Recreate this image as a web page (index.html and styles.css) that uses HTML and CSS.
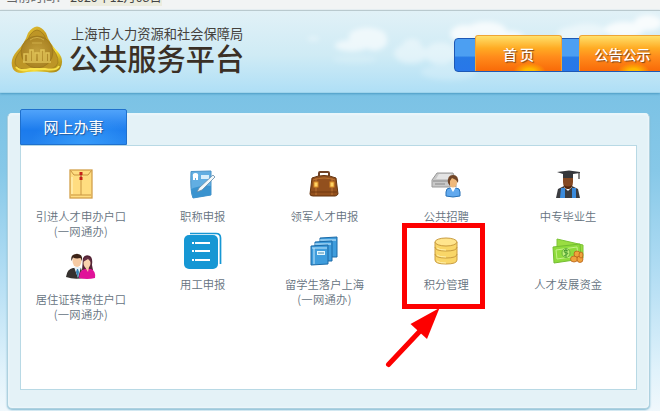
FILE: index.html
```html
<!DOCTYPE html>
<html lang="zh-CN">
<head>
<meta charset="utf-8">
<title>公共服务平台</title>
<link rel="stylesheet" href="styles.css">
</head>
<body>
<div class="topbar"><span>当前时间： <b>2020年12月08日</b></span></div>
<header class="header">
  <svg class="clouds" viewBox="0 0 660 82" aria-hidden="true">
    <defs><filter id="soft" x="-20%" y="-30%" width="140%" height="160%"><feGaussianBlur stdDeviation="2.5"/></filter></defs>
    <g fill="#fff" filter="url(#soft)">
      <g opacity=".6"><ellipse cx="368" cy="26" rx="19" ry="9"/><ellipse cx="352" cy="35" rx="17" ry="6"/><ellipse cx="375" cy="30" rx="13" ry="10"/></g>
      <g opacity=".4"><ellipse cx="412" cy="43" rx="17" ry="10"/><ellipse cx="413" cy="34" rx="9" ry="6"/><ellipse cx="442" cy="43" rx="16" ry="11"/><ellipse cx="313" cy="28" rx="6" ry="2"/><ellipse cx="355" cy="49" rx="22" ry="4" opacity=".4"/></g>
      <g opacity=".75"><ellipse cx="488" cy="19" rx="20" ry="8"/><ellipse cx="466" cy="23" rx="14" ry="9"/><ellipse cx="510" cy="26" rx="16" ry="6"/></g>
      <g opacity=".45"><ellipse cx="590" cy="20" rx="20" ry="7"/><ellipse cx="575" cy="24" rx="15" ry="8"/></g>
      <g opacity=".8"><ellipse cx="652" cy="12" rx="14" ry="8"/><ellipse cx="628" cy="19" rx="20" ry="8"/></g>
      <ellipse cx="450" cy="62" rx="28" ry="8" opacity=".2"/>
    </g>
  </svg>
  <svg class="emblem" viewBox="0 0 52 48" aria-hidden="true">
    <defs>
      <linearGradient id="gold" x2="1" y2="1"><stop offset="0" stop-color="#f4d73d"/><stop offset=".45" stop-color="#c2971e"/><stop offset=".7" stop-color="#f7dc34"/><stop offset="1" stop-color="#94700e"/></linearGradient>
      <radialGradient id="coin"><stop offset="0" stop-color="#c3a03c"/><stop offset="1" stop-color="#a98222"/></radialGradient>
    </defs>
    <path d="M17 7Q26-6 35 7Q38 17 47 26Q54 34 49 43Q45 48 36 46Q26 45 16 46Q6 49 2 43Q-2 34 6 25Q14 17 17 7Z" fill="url(#gold)"/>
    <path d="M19 9Q26-1 33 9L37 18Q48 28 47 37Q44 44 34 43L18 43Q6 45 4 37Q4 29 14 20Z" fill="#bd9526" stroke="#94701a" stroke-width=".6"/>
    <circle cx="26" cy="26" r="16" fill="url(#coin)" stroke="#94701a" stroke-width=".6"/>
    <path d="M13 36V28h4v7m2 0V24h3v11m2 0V27h4v8m2 0V24h3v11m2 0v-8h3v8M12 36h28" fill="none" stroke="#e0c257" stroke-width="1.500"/>
    <path d="M19 14q7-5 14 0M21 17h10" fill="none" stroke="#cfae48"/>
    <path d="M5 41q4 5 14 2h15q12 2 14-3" fill="none" stroke="#f9e24a" stroke-width="2"/>
  </svg>
  <div class="brand">
    <div class="org">上海市人力资源和社会保障局</div>
    <div class="name">公共服务平台</div>
  </div>
  <nav class="nav">
    <a class="nav-item">首 页</a>
    <a class="nav-item">公告公示</a>
  </nav>
</header>
<main class="panel">
  <h2 class="tab">网上办事</h2>
  <section class="services">
    <div class="col">
      <a class="item">
        <span class="icon"><svg width="24" height="30" viewBox="0 0 24 30"><rect x="1" y="1" width="22" height="28" fill="#ffdd80" stroke="#d3a04a" stroke-width="1.3"/><path d="M1.500 1.500L5 6h14l3.500-4.500M12 7v19M2 26h20" fill="none" stroke="#c99541"/><path d="M3 8v17" stroke="#ffeeb0" stroke-width="1.500"/><rect x="10.500" y="3" width="3" height="3" fill="#c5221a"/><rect x="10.500" y="8" width="3" height="3" fill="#c5221a"/><path d="M12 6v2" stroke="#a33"/></svg></span>
        <span class="label">引进人才申办户口<br><span class="sub">(一网通办)</span></span>
      </a>
      <a class="item">
        <span class="icon"><svg width="31" height="27" viewBox="0 0 31 27"><path d="M1 24Q2 16 8 15L16 15L19 25Q9 27 1 24" fill="#35312e"/><path d="M9 14l4 11 3-11" fill="#e6f1f8"/><path d="M12 16l-1 3 2 6 1-6-1-3" fill="#3382b5"/><ellipse cx="12" cy="8" rx="4.500" ry="6" fill="#f6cba4"/><path d="M6.500 8Q5 1 12 .7Q18 1 17 8L15.500 5Q11 6 8 4.500Z" fill="#3c2317"/><path d="M18 5Q20 1 25 3Q28 5 27 12L28 17H17Z" fill="#542435"/><path d="M14 25Q14 17 20 16L26 16Q31 18 30 25Q22 27 14 25" fill="#e01299"/><ellipse cx="22" cy="10" rx="3.500" ry="5" fill="#f9d2ae"/><path d="M20 14h4l-1 5z" fill="#f6cba4"/><path d="M18 9Q18 4 23 4Q26 5 26 9L23 6Z" fill="#653044"/></svg></span>
        <span class="label">居住证转常住户口<br><span class="sub">(一网通办)</span></span>
      </a>
    </div>
    <div class="col">
      <a class="item">
        <span class="icon"><svg width="28" height="29" viewBox="0 0 28 29"><path d="M2 1.500L22 1v24L4 28Q1 22 2 1.500" fill="#62aee2" stroke="#4b94c8"/><path d="M2 19Q14 14 22 16v9L4 28Z" fill="#3a93cf"/><path d="M4 10V7q-1-4 2.500-4T9 7v3H7V8H6v2z" fill="#fff"/><path d="M12 5h8v4h-8z" fill="#d8effc"/><path d="M8 22l2-4L24 5l2 2-13 13z" fill="#f3f8fa" stroke="#638ba8" stroke-width=".8"/></svg></span>
        <span class="label">职称申报</span>
      </a>
      <a class="item">
        <span class="icon"><svg width="38" height="38" viewBox="0 0 38 38"><path d="M6 1.500H32Q36.500 1.500 36.500 6V32" fill="none" stroke="#1697d4" stroke-width="1.700"/><rect x="0" y="3" width="34" height="34" rx="5" fill="#1697d4"/><path d="M8 11h2m1 0h15M8 19h2m1 0h15M8 28h2m1 0h15" stroke="#fff" stroke-width="2"/></svg></span>
        <span class="label">用工申报</span>
      </a>
    </div>
    <div class="col">
      <a class="item">
        <span class="icon"><svg width="30" height="26" viewBox="0 0 30 26"><path d="M10 5V2q0-1 1-1h8q1 0 1 1v3" fill="none" stroke="#704226" stroke-width="2"/><path d="M3 7Q15 2 27 7L29 23Q28 25 26 25H4Q1 25 1 23Z" fill="#92501e" stroke="#65330d"/><path d="M4 9Q15 5 26 9M7 7v17M23 7v17" fill="none" stroke="#bd7432"/><path d="M2 21h26" stroke="#713810"/><rect x="5" y="11" width="4" height="5" fill="#ffd365" stroke="#d88924"/><rect x="21" y="11" width="4" height="5" fill="#ffd365" stroke="#d88924"/></svg></span>
        <span class="label">领军人才申报</span>
      </a>
      <a class="item">
        <span class="icon"><svg width="28" height="30" viewBox="0 0 28 30"><g fill="#3f9ddd" stroke="#1c6ba8"><path d="M10 2L27 1v20H10z"/><path d="M10 4h16" stroke="#d7f1ff"/><path d="M5 6L22 5v20H5z"/><path d="M5 8h16" stroke="#d7f1ff"/><path d="M1 10l17-1v19l-17 1z"/></g><path d="M2 12h15M4 12v16" stroke="#c5e7fa"/><path d="M7 15h8v4H7z" fill="#e5f7ff"/><path d="M8 17h6" stroke="#48a"/></svg></span>
        <span class="label">留学生落户上海<br><span class="sub">(一网通办)</span></span>
      </a>
    </div>
    <div class="col">
      <a class="item">
        <span class="icon"><svg width="30" height="27" viewBox="0 0 30 27"><path d="M1 9L6 2h16l3 7v7H1z" fill="#c8c8c8" stroke="#999"/><path d="M5 8l3-5h12l2 5z" fill="#e4e4e4"/><path d="M2 10h22M4 13h10" stroke="#888"/><path d="M15 25v-4q0-4 4-4h6q4 0 4 4v4q-7 2-14 0" fill="#61a9ee" stroke="#2871b6"/><path d="M19 16l3 5 3-5" fill="#fff"/><ellipse cx="22" cy="11" rx="4" ry="5.500" fill="#efb87a"/><path d="M17 12q-1-8 5-8 6 0 5 8l-2-3-4-2-2 3v5z" fill="#714527"/></svg></span>
        <span class="label">公共招聘</span>
      </a>
      <a class="item">
        <span class="icon"><svg width="24" height="28" viewBox="0 0 24 28"><g fill="#f9d668" stroke="#c99c3f"><path d="M1 5v18q0 4 11 4t11-4V5"/><ellipse cx="12" cy="5" rx="11" ry="4" fill="#ffe58d"/><path d="M1 10q0 4 11 4t11-4M1 17q0 4 11 4t11-4" fill="none"/></g><path d="M3 11q2 2 9 2M3 18q2 2 9 2M3 24q2 2 9 2" stroke="#fff0a9" fill="none"/></svg></span>
        <span class="label">积分管理</span>
      </a>
    </div>
    <div class="col">
      <a class="item">
        <span class="icon"><svg width="26" height="29" viewBox="0 0 26 29"><path d="M1 28l2-9 6-3h8l6 3 2 9z" fill="#3b3c40"/><path d="M6 18h4v10H5zm11 0h4v10h-4z" fill="#3b8bdc"/><path d="M9 17h8l-4 4z" fill="#fff"/><path d="M8 6h10v6q0 6-5 7-5-1-5-7z" fill="#854923"/><path d="M9 15q4 3 8 0-1 4-4 4t-4-4" fill="#54270e"/><path d="M2 2L14 .5 25 2v1L18 4v4H8V4z" fill="#35373b"/><path d="M24 2v7" stroke="#444" stroke-width="1.300"/></svg></span>
        <span class="label">中专毕业生</span>
      </a>
      <a class="item">
        <span class="icon"><svg width="32" height="26" viewBox="0 0 32 26"><path d="M5 1l26 6v13L5 15z" fill="#9add42" stroke="#7cc436"/><path d="M1 9l27-3 1 15-27 4z" fill="#8edb3c" stroke="#74bd32"/><path d="M4 12l21-3 1 9-21 3z" fill="none" stroke="#c5f287"/><ellipse cx="14" cy="15" rx="4" ry="4.500" fill="#bded77" stroke="#66b43a"/><path d="M16 13q-4-2-4 0t3 2-3 3M14 11v8" fill="none" stroke="#469a30"/><g fill="#efa33c" stroke="#b96219" stroke-width=".8"><ellipse cx="22" cy="21" rx="3.500" ry="3"/><ellipse cx="28" cy="21" rx="3" ry="3.500"/><ellipse cx="25" cy="16" rx="3" ry="3"/><ellipse cx="29" cy="17" rx="2" ry="3"/></g></svg></span>
        <span class="label">人才发展资金</span>
      </a>
    </div>
  </section>
</main>
<svg class="callout" width="101" height="146" viewBox="0 0 101 146" aria-hidden="true"><rect x="19.500" y="3.500" width="78" height="81" fill="none" stroke="#fd0000" stroke-width="5"/><path d="M3.500 142.500L36 108" stroke="#fd0000" stroke-width="5" stroke-linecap="round"/><path d="M54.500 86L25.500 102 42 117z" fill="#fd0000"/></svg>
</body>
</html>
```
FILE: styles.css
```css
* { box-sizing: border-box; }
html { height: 100%; overflow: hidden; }
body {
  margin: 0;
  height: 411px;
  overflow: hidden;
  position: relative;
  font-family: "Noto Sans CJK SC", sans-serif;
  background: linear-gradient(#7bc2e5 93px, #86c8e8 170px, #b0dcf3 270px, #e0f2fb 370px, #f0f8fc 411px);
}
.topbar {
  height: 10px;
  overflow: hidden;
  background: #f2f4f4;
  display: flex;
  align-items: flex-end;
  padding: 0 0 6px 6px;
  font-size: 12.3px;
  line-height: 14px;
  color: #666;
  white-space: pre;
}
.topbar b { font-weight: 400; color: #444; background: #ececdf; }
.header {
  height: 83px;
  position: relative;
  display: flex;
  align-items: flex-start;
  border-top: 1px solid #b9c9ce;
  border-bottom: 1px solid #9fd4ec;
  background: linear-gradient(#e1f1f7, #cfebf5 55%, #afdff6);
  box-shadow: 0 1px 2px #4c9bc3;
}
.clouds { position: absolute; left: 0; top: 0; width: 660px; height: 81px; }
.emblem { position: relative; flex: none; width: 52px; height: 48px; margin: 15px 0 0 11px; }
.brand { position: relative; flex: none; margin: 13px 0 0 8px; width: 175px; color: #3a3026; white-space: nowrap; }
.org { font-size: 13.25px; line-height: 20px; color: #45413c; }
.name { font-size: 29.2px; line-height: 34px; margin: -4px 0 0 -2px; font-weight: 500; }
.nav {
  position: relative;
  flex: none;
  display: flex;
  align-items: flex-end;
  width: 225px;
  height: 34px;
  margin: 27px 0 0 208px;
  padding: 0 0 0 20px;
  gap: 17px;
  border: 1px solid #1d58b5;
  border-radius: 4px 0 0 4px;
  background: linear-gradient(#4c9ff2 0 52%, #277ae6 58%, #2877e9);
}
.nav-item {
  flex: none;
  width: 87px;
  height: 36px;
  border: 1px solid #efa535;
  border-bottom: 0;
  border-radius: 3px 3px 0 0;
  background: radial-gradient(ellipse 16px 8px at 63% 100%, #ffb800 30%, transparent), linear-gradient(#ffe06b, #ffab23 35%, #ff8b1b 60%, #f86a08);
  color: #fff;
  font-size: 14px;
  font-weight: 500;
  line-height: 36px;
  text-align: center;
  text-shadow: 1px 1px 1px #7c4217;
}
.panel {
  width: 643px;
  height: 296px;
  margin: 20px 0 0 7px;
  padding: 0 12px;
  display: flex;
  flex-direction: column;
  border: 1px solid #aed1df;
  border-top-color: #e9f7fb;
  border-radius: 5px;
  background: #e4f2f7;
  box-shadow: inset 0 0 3px #f8fdff, 0 1px 2px #80b9d2;
}
.tab {
  flex: none;
  width: 107px;
  height: 36px;
  margin: -5px 0 0;
  z-index: 1;
  border: 1px solid #1f70cd;
  border-radius: 2px 2px 0 0;
  background: radial-gradient(ellipse at 60% 100%, #369bfa, transparent 60%), linear-gradient(#50a3fa, #1b7bed 60%, #2381ed);
  color: #fff;
  font-size: 15px;
  font-weight: 400;
  line-height: 34px;
  text-align: center;
  text-shadow: 1px 1px 1px #225a9f;
}
.services {
  height: 245px;
  width: 617px;
  padding-top: 18px;
  display: grid;
  grid-template-columns: repeat(5, 121.8px);
  background: #fff;
  border: 1px solid #b8d9e5;
}
.col { display: flex; flex-direction: column; gap: 7px; margin-left: -1px; margin-right: 1px; }
.item { display: flex; flex-direction: column; align-items: center; gap: 5px; }
.item + .item { gap: 6px; }
.icon { height: 40px; display: flex; align-items: center; justify-content: center; }
.icon svg { display: block; }
.label { font-size: 11.3px; line-height: 15px; color: #65727e; text-align: center; white-space: nowrap; font-weight: 350; }
.sub { letter-spacing: .3px; }
.callout { position: absolute; left: 385px; top: 222px; }
```
